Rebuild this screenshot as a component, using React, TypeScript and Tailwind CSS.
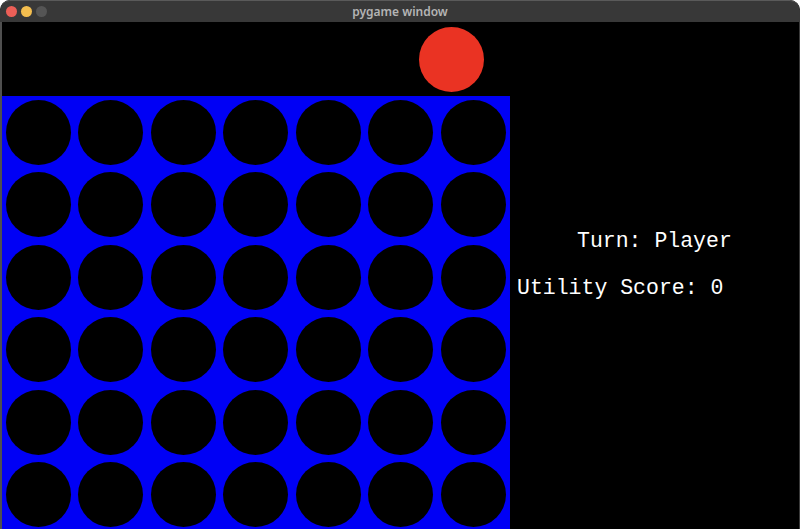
const ROWS = 6;
const COLS = 7;

function TitleBar() {
  return (
    <div className="relative flex h-[22px] shrink-0 items-center rounded-t-[10px] border-t border-[#5a5a5a] bg-[#383838]">
      <div className="flex items-center gap-[4px] pl-[6px]">
        <span className="h-[11px] w-[11px] rounded-full bg-[#ec5f57]" />
        <span className="h-[11px] w-[11px] rounded-full bg-[#f4be4f]" />
        <span className="h-[11px] w-[11px] rounded-full bg-[#555555]" />
      </div>
      <div className="absolute inset-0 flex items-center justify-center font-['Noto_Sans',sans-serif] text-[12px] font-semibold text-[#b4b4b4]">
        pygame window
      </div>
    </div>
  );
}

function Board() {
  const cells = Array.from({ length: ROWS * COLS }, (_, i) => i);
  return (
    <div className="grid shrink-0 grid-cols-[repeat(7,72.5px)] grid-rows-[repeat(6,72.5px)] bg-[#0000f5]">
      {cells.map((i) => (
        <div key={i} className="flex items-center justify-center">
          <div className="h-[65px] w-[65px] rounded-full bg-black" />
        </div>
      ))}
    </div>
  );
}

export default function App() {
  return (
    <div className="h-[529px] w-[800px] overflow-hidden bg-white">
      <div className="flex h-full flex-col overflow-hidden rounded-t-[10px] bg-black">
        <TitleBar />
        <div className="flex flex-1 overflow-hidden border-l-2 border-r border-l-[#4f4f4f] border-r-[#3a3a3a]">
          <div className="flex w-[508px] shrink-0 flex-col">
            <div className="h-[74px] shrink-0 pl-[417px] pt-[5px]">
              <div className="h-[65px] w-[65px] rounded-full bg-[#ea3323]" />
            </div>
            <Board />
          </div>
          <div className="flex flex-1 flex-col pt-[209px] font-['Liberation_Mono',monospace] text-[21.5px] leading-none text-white">
            <div className="pl-[67px]">Turn: Player</div>
            <div className="mt-[25px] pl-[7px]">Utility Score: 0</div>
          </div>
        </div>
      </div>
    </div>
  );
}
